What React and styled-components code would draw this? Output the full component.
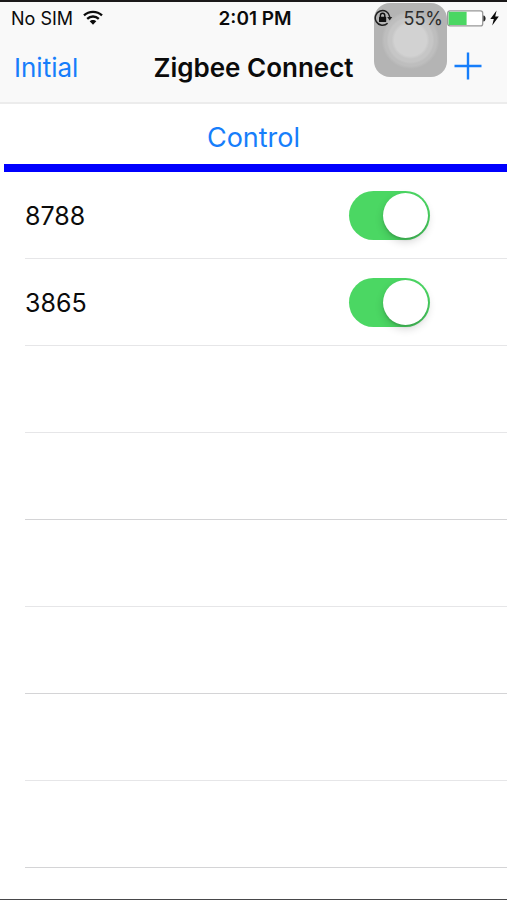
import React, { useState } from "react";
import styled, { createGlobalStyle } from "styled-components";

const GlobalStyle = createGlobalStyle`
  * { box-sizing: border-box; }
  body {
    margin: 0;
    background: #fff;
    color: #0b0b0b;
    font-family: Inter, "Liberation Sans", sans-serif;
  }
`;

const Screen = styled.div`
  position: relative;
  display: flex;
  flex-direction: column;
  min-height: 100vh;
  border-top: 2px solid #1b191a;
  border-bottom: 1px solid #48484a;
  overflow: hidden;
`;

const Header = styled.header`
  background: #f9f9f9;
  border-bottom: 2px solid #ececec;
`;

const StatusBar = styled.div`
  position: relative;
  z-index: 2;
  display: grid;
  grid-template-columns: 1fr auto 1fr;
  align-items: center;
  height: 32px;
  padding: 0 8px 0 11px;
  font-size: 18px;
  pointer-events: none;
`;

const StatusGroup = styled.div`
  display: flex;
  align-items: center;
  justify-content: ${(p) => (p.$end ? "flex-end" : "flex-start")};
  gap: ${(p) => (p.$end ? "4px" : "10px")};
`;

const Time = styled.time`
  font-size: 19px;
  font-weight: 600;
`;

const Percent = styled.span`
  margin-left: 6px;
  color: #2c2c2c;
`;

const NavBar = styled.nav`
  display: grid;
  grid-template-columns: 1fr auto 1fr;
  align-items: center;
  height: 68px;
  padding: 0 14px;
`;

const Title = styled.h1`
  margin: 0;
  font-size: 26px;
  font-weight: 600;
  line-height: 32px;
  white-space: nowrap;
`;

const TextButton = styled.button`
  justify-self: start;
  padding: 0;
  border: 0;
  background: none;
  color: #167efb;
  font: inherit;
  font-size: ${(p) => p.$size}px;
  line-height: 32px;
  cursor: pointer;
`;

const IconButton = styled(TextButton)`
  display: flex;
  justify-self: end;
  padding: 0 11px 4px 0;
`;

const AssistiveTouch = styled.button`
  position: absolute;
  z-index: 1;
  top: 1px;
  right: 60px;
  width: 73px;
  height: 74px;
  padding: 0;
  border: 0;
  border-radius: 16px;
  background: radial-gradient(
    circle at 50% 50%,
    #d2d2d2 0 16px,
    #c6c6c6 19px 22px,
    #bebebe 24px 26px,
    #b4b4b4 29px
  );
  cursor: pointer;
`;

const ControlBar = styled.div`
  display: flex;
  justify-content: center;
  align-items: center;
  height: 60px;
  padding-top: 8px;
`;

const Divider = styled.hr`
  width: auto;
  height: 8px;
  margin: 0 0 0 4px;
  border: 0;
  background: #0000fe;
`;

const DeviceList = styled.ul`
  margin: 0;
  padding: 0 0 0 25px;
  list-style: none;
`;

const DeviceRow = styled.li`
  display: flex;
  align-items: center;
  justify-content: space-between;
  height: 87px;
  padding-right: 77px;
  border-bottom: 1px solid ${(p) => (p.$strong ? "#d4d4d6" : "#e6e6e8")};
  font-size: 25px;
`;

const DeviceName = styled.label`
  padding-top: 2px;
`;

const Switch = styled.input`
  appearance: none;
  display: flex;
  align-items: center;
  width: 81px;
  height: 49px;
  margin: 0;
  padding: 0 2px;
  border-radius: 25px;
  background: ${(p) => (p.checked ? "#4bd763" : "#e5e5e5")};
  cursor: pointer;

  &::before {
    content: "";
    width: 45px;
    height: 45px;
    margin-left: ${(p) => (p.checked ? "auto" : "0")};
    border-radius: 50%;
    background: #fff;
    box-shadow: 0 4px 8px rgba(0, 0, 0, 0.16), 0 2px 2px rgba(0, 0, 0, 0.12);
  }
`;

function WifiIcon() {
  return (
    <svg width="20" height="16" viewBox="0 0 20 16" fill="none" stroke="#0b0b0b" strokeWidth="2.3" aria-label="Wi-Fi">
      <path d="M1 5.4C6 .6 14 .6 19 5.4" />
      <path d="M4.2 8.8c3.3-3.1 8.3-3.1 11.6 0" />
      <path d="M6.7 11.3c1.8-1.8 4.8-1.8 6.6 0L10 14.7z" fill="#0b0b0b" stroke="none" />
    </svg>
  );
}

function RotationLockIcon() {
  return (
    <svg width="19" height="18" viewBox="0 0 19 18" fill="none" aria-label="Rotation lock">
      <path d="M13.6 14.2A7.3 7.3 0 1 1 15.8 8" stroke="#202020" strokeWidth="1.5" />
      <path d="M13.2 8h5l-2.5 3.4z" fill="#202020" />
      <rect x="5" y="7.8" width="7.2" height="5.2" rx=".6" fill="#111" />
      <path d="M6.4 8V6.4a2.2 2.2 0 0 1 4.4 0V8" stroke="#111" strokeWidth="1.4" />
    </svg>
  );
}

function BatteryIcon() {
  return (
    <svg width="39" height="17" viewBox="0 0 39 17" fill="none" aria-label="Battery">
      <rect x=".7" y=".9" width="35" height="15" rx="2.2" fill="#fff" stroke="#989898" strokeWidth="1.3" />
      <path d="M1.6 1.8h18v13.2h-18z" fill="#4bd763" />
      <path d="M36.4 5.4c2.9.4 2.9 5.6 0 6z" fill="#222" />
    </svg>
  );
}

function BoltIcon() {
  return (
    <svg width="9" height="16" viewBox="0 0 9 16" aria-label="Charging">
      <path d="M6.6.6L.3 9h3.5l-1.6 6.4L8.8 6.6H5.2z" fill="#0b0b0b" />
    </svg>
  );
}

function PlusIcon() {
  return (
    <svg width="28" height="28" viewBox="0 0 28 28" stroke="#167efb" strokeWidth="2.4" aria-hidden="true">
      <path d="M14 .5v27M.5 14h27" />
    </svg>
  );
}

const rows = [
  { id: "8788" },
  { id: "3865" },
  {},
  { strong: true },
  {},
  { strong: true },
  {},
  { strong: true },
];

export default function App() {
  const [on, setOn] = useState({ 8788: true, 3865: true });
  const toggle = (id) => setOn((prev) => ({ ...prev, [id]: !prev[id] }));

  return (
    <>
      <GlobalStyle />
      <Screen>
        <Header>
          <StatusBar>
            <StatusGroup>
              <span>No SIM</span>
              <WifiIcon />
            </StatusGroup>
            <Time>2:01 PM</Time>
            <StatusGroup $end>
              <RotationLockIcon />
              <Percent>55%</Percent>
              <BatteryIcon />
              <BoltIcon />
            </StatusGroup>
          </StatusBar>
          <NavBar>
            <TextButton type="button" $size={26}>Initial</TextButton>
            <Title>Zigbee Connect</Title>
            <IconButton type="button" $size={26} aria-label="Add device">
              <PlusIcon />
            </IconButton>
          </NavBar>
        </Header>
        <AssistiveTouch type="button" aria-label="AssistiveTouch" />
        <main>
          <ControlBar>
            <TextButton type="button" $size={27}>Control</TextButton>
          </ControlBar>
          <Divider />
          <DeviceList>
            {rows.map(({ id, strong }, i) => (
              <DeviceRow key={i} $strong={strong}>
                {id && (
                  <>
                    <DeviceName htmlFor={`device-${id}`}>{id}</DeviceName>
                    <Switch
                      id={`device-${id}`}
                      type="checkbox"
                      role="switch"
                      checked={on[id]}
                      onChange={() => toggle(id)}
                    />
                  </>
                )}
              </DeviceRow>
            ))}
          </DeviceList>
        </main>
      </Screen>
    </>
  );
}
